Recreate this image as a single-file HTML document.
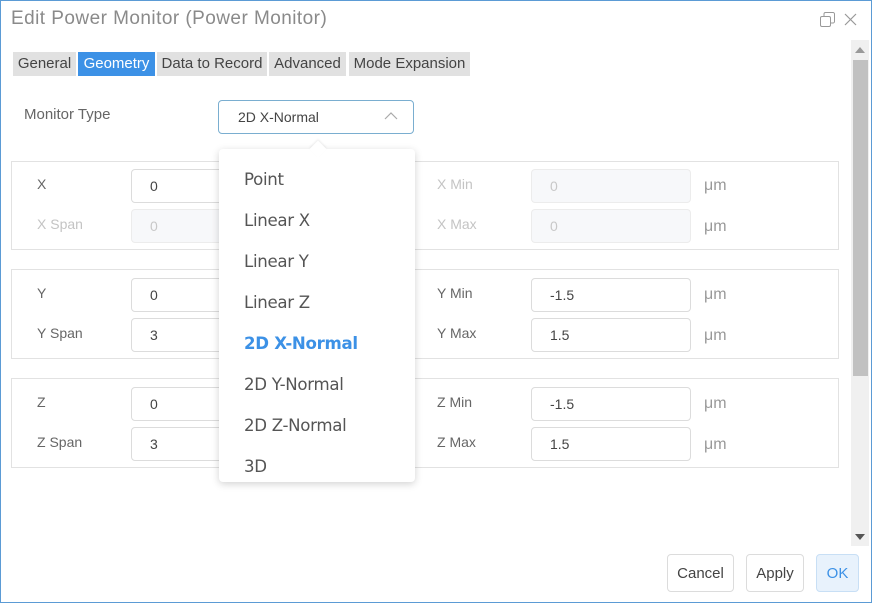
<!DOCTYPE html>
<html><head><meta charset="utf-8"><style>
*{box-sizing:border-box;margin:0;padding:0}
body{width:873px;height:606px;background:#fff;font-family:"Liberation Sans","DejaVu Sans",sans-serif;position:relative;overflow:hidden;color:#555}
.a{position:absolute}
#frame{left:0;top:0;width:872px;height:603px;border:1px solid #5b9bd5}
.title{left:11px;top:8px;font-size:19px;color:#8a8a8a;white-space:nowrap;letter-spacing:0.45px}
.tab{top:52px;height:24px;background:#e1e1e1;font-size:15px;color:#444;line-height:24px;text-align:center}
.tab.on{background:#3c91e6;color:#fff}
.lbl{font-size:14px;color:#666}
.dis{color:#c4c4c4}
.grp{left:11px;width:828px;border:1px solid #e2e2e2}
.in{height:34px;border:1px solid #dcdcdc;border-radius:4px;font-size:14px;color:#444;padding-left:18px;line-height:32px;background:#fff}
.in.d{background:#f7f8fa;border-color:#ececec;color:#c8c8c8}
.um{font-size:16px;color:#999}
.dd{left:219px;top:149px;width:196px;height:333px;background:#fff;border-radius:4px;box-shadow:0 2px 8px rgba(0,0,0,.18)}
.it{left:244px;font-size:16.6px;color:#555;font-family:"DejaVu Sans","Liberation Sans",sans-serif;letter-spacing:-0.3px}
.btn{top:554px;height:38px;border:1px solid #dcdcdc;border-radius:4px;font-size:15px;color:#444;text-align:center;line-height:38px;background:#fff}
</style></head><body>
<div class="a" id="frame"></div>
<div class="a title">Edit Power Monitor (Power Monitor)</div>
<svg class="a" style="left:819px;top:11px" width="17" height="17" viewBox="0 0 17 17"><rect x="1.5" y="5.5" width="10" height="10" rx="1.5" fill="#fff" stroke="#999"/><path d="M5 5.5V3a1.5 1.5 0 0 1 1.5-1.5h7.5a1.5 1.5 0 0 1 1.5 1.5v7.5a1.5 1.5 0 0 1-1.5 1.5h-2.5" fill="none" stroke="#999"/></svg>
<svg class="a" style="left:844px;top:13px" width="13" height="13" viewBox="0 0 13 13"><path d="M1 1L12 12M12 1L1 12" stroke="#999" stroke-width="1.2"/></svg>

<div class="a tab" style="left:13px;width:63px">General</div>
<div class="a tab on" style="left:78px;width:77px">Geometry</div>
<div class="a tab" style="left:157px;width:110px">Data to Record</div>
<div class="a tab" style="left:269px;width:77px">Advanced</div>
<div class="a tab" style="left:349px;width:121px">Mode Expansion</div>

<div class="a lbl" style="left:24px;top:106px;font-size:15px">Monitor Type</div>
<div class="a" style="left:218px;top:100px;width:196px;height:34px;border:1px solid #7aaed0;border-radius:4px;font-size:14px;color:#444;padding-left:19px;line-height:33px">2D X-Normal</div>
<svg class="a" style="left:384px;top:111px" width="14" height="9" viewBox="0 0 14 9"><path d="M1 8L7 2L13 8" fill="none" stroke="#aaa" stroke-width="1.2"/></svg>

<div class="a grp" style="top:161px;height:89px"></div>
<div class="a grp" style="top:269px;height:90px"></div>
<div class="a grp" style="top:378px;height:90px"></div>

<div class="a lbl" style="left:37px;top:176px">X</div>
<div class="a lbl dis" style="left:37px;top:216px">X Span</div>
<div class="a in" style="left:131px;top:169px;width:160px">0</div>
<div class="a in d" style="left:131px;top:209px;width:160px">0</div>
<div class="a lbl dis" style="left:437px;top:176px">X Min</div>
<div class="a lbl dis" style="left:437px;top:216px">X Max</div>
<div class="a in d" style="left:531px;top:169px;width:160px">0</div>
<div class="a in d" style="left:531px;top:209px;width:160px">0</div>
<div class="a um dis" style="left:704px;top:177px">μm</div>
<div class="a um dis" style="left:704px;top:218px">μm</div>

<div class="a lbl" style="left:37px;top:285px">Y</div>
<div class="a lbl" style="left:37px;top:325px">Y Span</div>
<div class="a in" style="left:131px;top:278px;width:160px">0</div>
<div class="a in" style="left:131px;top:318px;width:160px">3</div>
<div class="a lbl" style="left:437px;top:285px">Y Min</div>
<div class="a lbl" style="left:437px;top:325px">Y Max</div>
<div class="a in" style="left:531px;top:278px;width:160px">-1.5</div>
<div class="a in" style="left:531px;top:318px;width:160px">1.5</div>
<div class="a um" style="left:704px;top:286px">μm</div>
<div class="a um" style="left:704px;top:327px">μm</div>

<div class="a lbl" style="left:37px;top:394px">Z</div>
<div class="a lbl" style="left:37px;top:434px">Z Span</div>
<div class="a in" style="left:131px;top:387px;width:160px">0</div>
<div class="a in" style="left:131px;top:427px;width:160px">3</div>
<div class="a lbl" style="left:437px;top:394px">Z Min</div>
<div class="a lbl" style="left:437px;top:434px">Z Max</div>
<div class="a in" style="left:531px;top:387px;width:160px">-1.5</div>
<div class="a in" style="left:531px;top:427px;width:160px">1.5</div>
<div class="a um" style="left:704px;top:395px">μm</div>
<div class="a um" style="left:704px;top:436px">μm</div>

<div class="a dd"></div>
<div class="a" style="left:312px;top:143px;width:12px;height:12px;background:#fff;transform:rotate(45deg);box-shadow:-1px -1px 2px rgba(0,0,0,.08)"></div>
<div class="a it" style="top:170px">Point</div>
<div class="a it" style="top:211px">Linear X</div>
<div class="a it" style="top:252px">Linear Y</div>
<div class="a it" style="top:293px">Linear Z</div>
<div class="a it" style="top:334px;color:#3c91e6;font-weight:bold">2D X-Normal</div>
<div class="a it" style="top:375px">2D Y-Normal</div>
<div class="a it" style="top:416px">2D Z-Normal</div>
<div class="a it" style="top:457px">3D</div>

<div class="a" style="left:851px;top:40px;width:18px;height:506px;background:#f0f0f0"></div>
<div class="a" style="left:853px;top:60px;width:15px;height:316px;background:#c1c1c1"></div>
<svg class="a" style="left:855px;top:47px" width="10" height="6"><path d="M0 6L5 0L10 6Z" fill="#999"/></svg>
<svg class="a" style="left:855px;top:534px" width="10" height="6"><path d="M0 0L5 6L10 0Z" fill="#555"/></svg>

<div class="a btn" style="left:667px;width:67px">Cancel</div>
<div class="a btn" style="left:746px;width:58px">Apply</div>
<div class="a btn" style="left:816px;width:43px;background:#e8f2fc;border-color:#c8dff5;color:#3c91e6">OK</div>
</body></html>
